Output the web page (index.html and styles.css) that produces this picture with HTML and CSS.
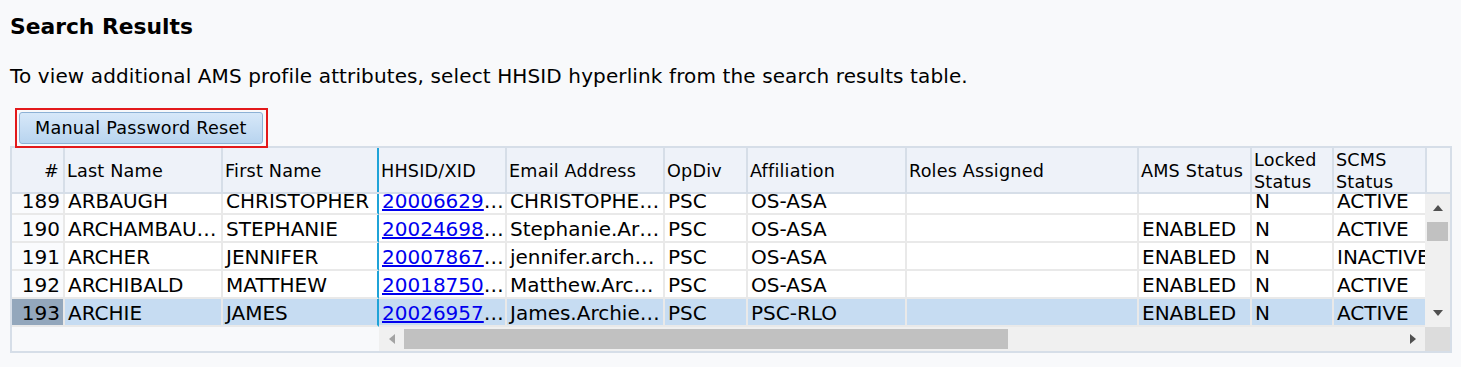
FILE: index.html
```html
<!DOCTYPE html>
<html lang="en">
<head>
<meta charset="utf-8">
<title>Search Results</title>
<link rel="stylesheet" href="styles.css">
</head>
<body>
<h2 class="title">Search Results</h2>
<p class="intro">To view additional AMS profile attributes, select HHSID hyperlink from the search results table.</p>
<div class="toolbar">
  <span class="highlight"><button class="btn" type="button">Manual Password Reset</button></span>
</div>
<div class="grid">
  <div class="head frozen">
    <div class="hcell num w-num">#</div>
    <div class="hcell w-last">Last Name</div>
    <div class="hcell w-first split">First Name</div>
  </div>
  <div class="head scroll">
    <div class="hcell w-id">HHSID/XID</div>
    <div class="hcell w-email">Email Address</div>
    <div class="hcell w-op">OpDiv</div>
    <div class="hcell w-aff">Affiliation</div>
    <div class="hcell w-roles">Roles Assigned</div>
    <div class="hcell w-ams">AMS Status</div>
    <div class="hcell w-lock">Locked Status</div>
    <div class="hcell w-scms">SCMS Status</div>
  </div>
  <div class="head vhead"></div>

  <div class="body">
    <div class="rows">
      <div class="row"><div class="cell num w-num">189</div><div class="cell w-last">ARBAUGH</div><div class="cell w-first split">CHRISTOPHER</div></div>
      <div class="row"><div class="cell num w-num">190</div><div class="cell w-last" title="ARCHAMBAULT">ARCHAMBAU…</div><div class="cell w-first split">STEPHANIE</div></div>
      <div class="row"><div class="cell num w-num">191</div><div class="cell w-last">ARCHER</div><div class="cell w-first split">JENNIFER</div></div>
      <div class="row"><div class="cell num w-num">192</div><div class="cell w-last">ARCHIBALD</div><div class="cell w-first split">MATTHEW</div></div>
      <div class="row sel"><div class="cell num w-num">193</div><div class="cell w-last">ARCHIE</div><div class="cell w-first split">JAMES</div></div>
    </div>
  </div>
  <div class="body">
    <div class="rows">
      <div class="row"><div class="cell w-id"><a href="#">20006629</a>…</div><div class="cell w-email">CHRISTOPHE…</div><div class="cell w-op">PSC</div><div class="cell w-aff">OS-ASA</div><div class="cell w-roles"></div><div class="cell w-ams"></div><div class="cell w-lock">N</div><div class="cell w-scms">ACTIVE</div></div>
      <div class="row"><div class="cell w-id"><a href="#">20024698</a>…</div><div class="cell w-email">Stephanie.Ar…</div><div class="cell w-op">PSC</div><div class="cell w-aff">OS-ASA</div><div class="cell w-roles"></div><div class="cell w-ams">ENABLED</div><div class="cell w-lock">N</div><div class="cell w-scms">ACTIVE</div></div>
      <div class="row"><div class="cell w-id"><a href="#">20007867</a>…</div><div class="cell w-email">jennifer.arch…</div><div class="cell w-op">PSC</div><div class="cell w-aff">OS-ASA</div><div class="cell w-roles"></div><div class="cell w-ams">ENABLED</div><div class="cell w-lock">N</div><div class="cell w-scms">INACTIVE</div></div>
      <div class="row"><div class="cell w-id"><a href="#">20018750</a>…</div><div class="cell w-email">Matthew.Arc…</div><div class="cell w-op">PSC</div><div class="cell w-aff">OS-ASA</div><div class="cell w-roles"></div><div class="cell w-ams">ENABLED</div><div class="cell w-lock">N</div><div class="cell w-scms">ACTIVE</div></div>
      <div class="row sel"><div class="cell w-id"><a href="#">20026957</a>…</div><div class="cell w-email">James.Archie…</div><div class="cell w-op">PSC</div><div class="cell w-aff">PSC-RLO</div><div class="cell w-roles"></div><div class="cell w-ams">ENABLED</div><div class="cell w-lock">N</div><div class="cell w-scms">ACTIVE</div></div>
    </div>
  </div>
  <div class="vscroll">
    <div class="vbtn up"><svg width="10" height="6" viewBox="0 0 10 6"><polygon points="0,6 5,0 10,6" fill="#505050"/></svg></div>
    <div class="vthumb"></div>
    <div class="vspace"></div>
    <div class="vbtn down"><svg width="10" height="6" viewBox="0 0 10 6"><polygon points="0,0 10,0 5,6" fill="#505050"/></svg></div>
  </div>

  <div class="blank"></div>
  <div class="hscroll">
    <div class="hbtn"><svg width="6" height="10" viewBox="0 0 6 10"><polygon points="6,0 6,10 0,5" fill="#a3a3a3"/></svg></div>
    <div class="hthumb"></div>
    <div class="hspace"></div>
    <div class="hbtn"><svg width="6" height="10" viewBox="0 0 6 10"><polygon points="0,0 6,5 0,10" fill="#505050"/></svg></div>
  </div>
  <div class="corner"></div>
</div>
</body>
</html>
```

FILE: styles.css
```css
* { box-sizing: border-box; }
html, body { margin: 0; background: #f8f9fb; }
body {
  font-family: "DejaVu Sans", Verdana, sans-serif;
  color: #000;
  padding: 0 10px;
}
.title {
  font-size: 21.8px;
  font-weight: bold;
  line-height: 26px;
  margin: 13.5px 0 0;
}
.intro {
  font-size: 20px;
  line-height: 24px;
  letter-spacing: 0.12px;
  margin: 24.3px 0 0;
}
.toolbar {
  display: flex;
  margin-top: 20.2px;
  margin-bottom: -2px;
  padding-left: 5px;
  position: relative;
  z-index: 1;
}
.highlight {
  display: flex;
  border: 2px solid #e3191b;
  padding: 2px 3px 2px 2px;
}
.btn {
  font-family: "DejaVu Sans", Verdana, sans-serif;
  font-size: 17.6px;
  letter-spacing: 0.25px;
  line-height: 30px;
  height: 32px;
  padding: 0 15px;
  border: 1px solid #8db1d5;
  border-radius: 3px;
  background: linear-gradient(#d7e8f9, #b8d4ef);
  color: #000;
}
.grid {
  width: 1442px;
  border: 2px solid #d6dee8;
  display: grid;
  grid-template-columns: 367px 1046px 25px;
  grid-template-rows: 46px 133px 24px;
}
.head {
  display: flex;
  overflow: hidden;
  background: #eef2f9;
  border-bottom: 2px solid #d6dee8;
}
.vhead {
  background: #f5f7fa;
  border-left: 2px solid #d6dee8;
}
.hcell {
  flex: none;
  display: flex;
  align-items: center;
  padding: 2px 2px 0;
  border-right: 2px solid #d6dee8;
  font-size: 17.6px;
  letter-spacing: 0.2px;
  line-height: 22px;
}
.hcell.num { justify-content: flex-end; padding-right: 4px; }
.body { overflow: hidden; }
.rows { margin-top: -7px; }
.row { display: flex; height: 28px; }
.cell {
  flex: none;
  height: 28px;
  padding: 0 0 0 3px;
  background: #fff;
  border-right: 2px solid #e9e9e9;
  border-bottom: 2px solid #e9e9e9;
  font-size: 20px;
  line-height: 28px;
  white-space: nowrap;
  overflow: hidden;
}
.cell.num { text-align: right; padding: 0 3px 0 0; background: #fafbfd; }
.row.sel .cell { background: #c6dcf2; }
.row.sel .cell.num { background: #93a7bc; }
.hcell.split, .cell.split { border-right-color: #1fa3d8; }
.cell a { color: #0000ee; text-decoration: underline; }

.w-num { width: 53px; }
.w-last { width: 158px; }
.w-first { width: 156px; }
.w-id { width: 128px; }
.w-email { width: 158px; }
.w-op { width: 83px; }
.w-aff { width: 159px; }
.w-roles { width: 232px; }
.w-ams { width: 113px; }
.w-lock { width: 82px; }
.w-scms { width: 110px; }

.vscroll {
  background: #f0f0f0;
  display: flex;
  flex-direction: column;
}
.vbtn {
  display: flex;
  align-items: center;
  justify-content: center;
  height: 28px;
}
.vbtn.down { height: 27px; }
.vthumb {
  height: 19px;
  width: 21px;
  margin-left: 2px;
  background: #c1c1c1;
}
.vspace { flex: 1; }
.blank { background: #f8f9fb; }
.hscroll {
  background: #f0f0f0;
  display: flex;
  align-items: center;
}
.hbtn {
  width: 25px;
  height: 24px;
  display: flex;
  align-items: center;
  justify-content: center;
}
.hthumb {
  width: 604px;
  height: 20px;
  background: #c1c1c1;
}
.hspace { flex: 1; }
.corner { background: #dcdcdc; }
```
